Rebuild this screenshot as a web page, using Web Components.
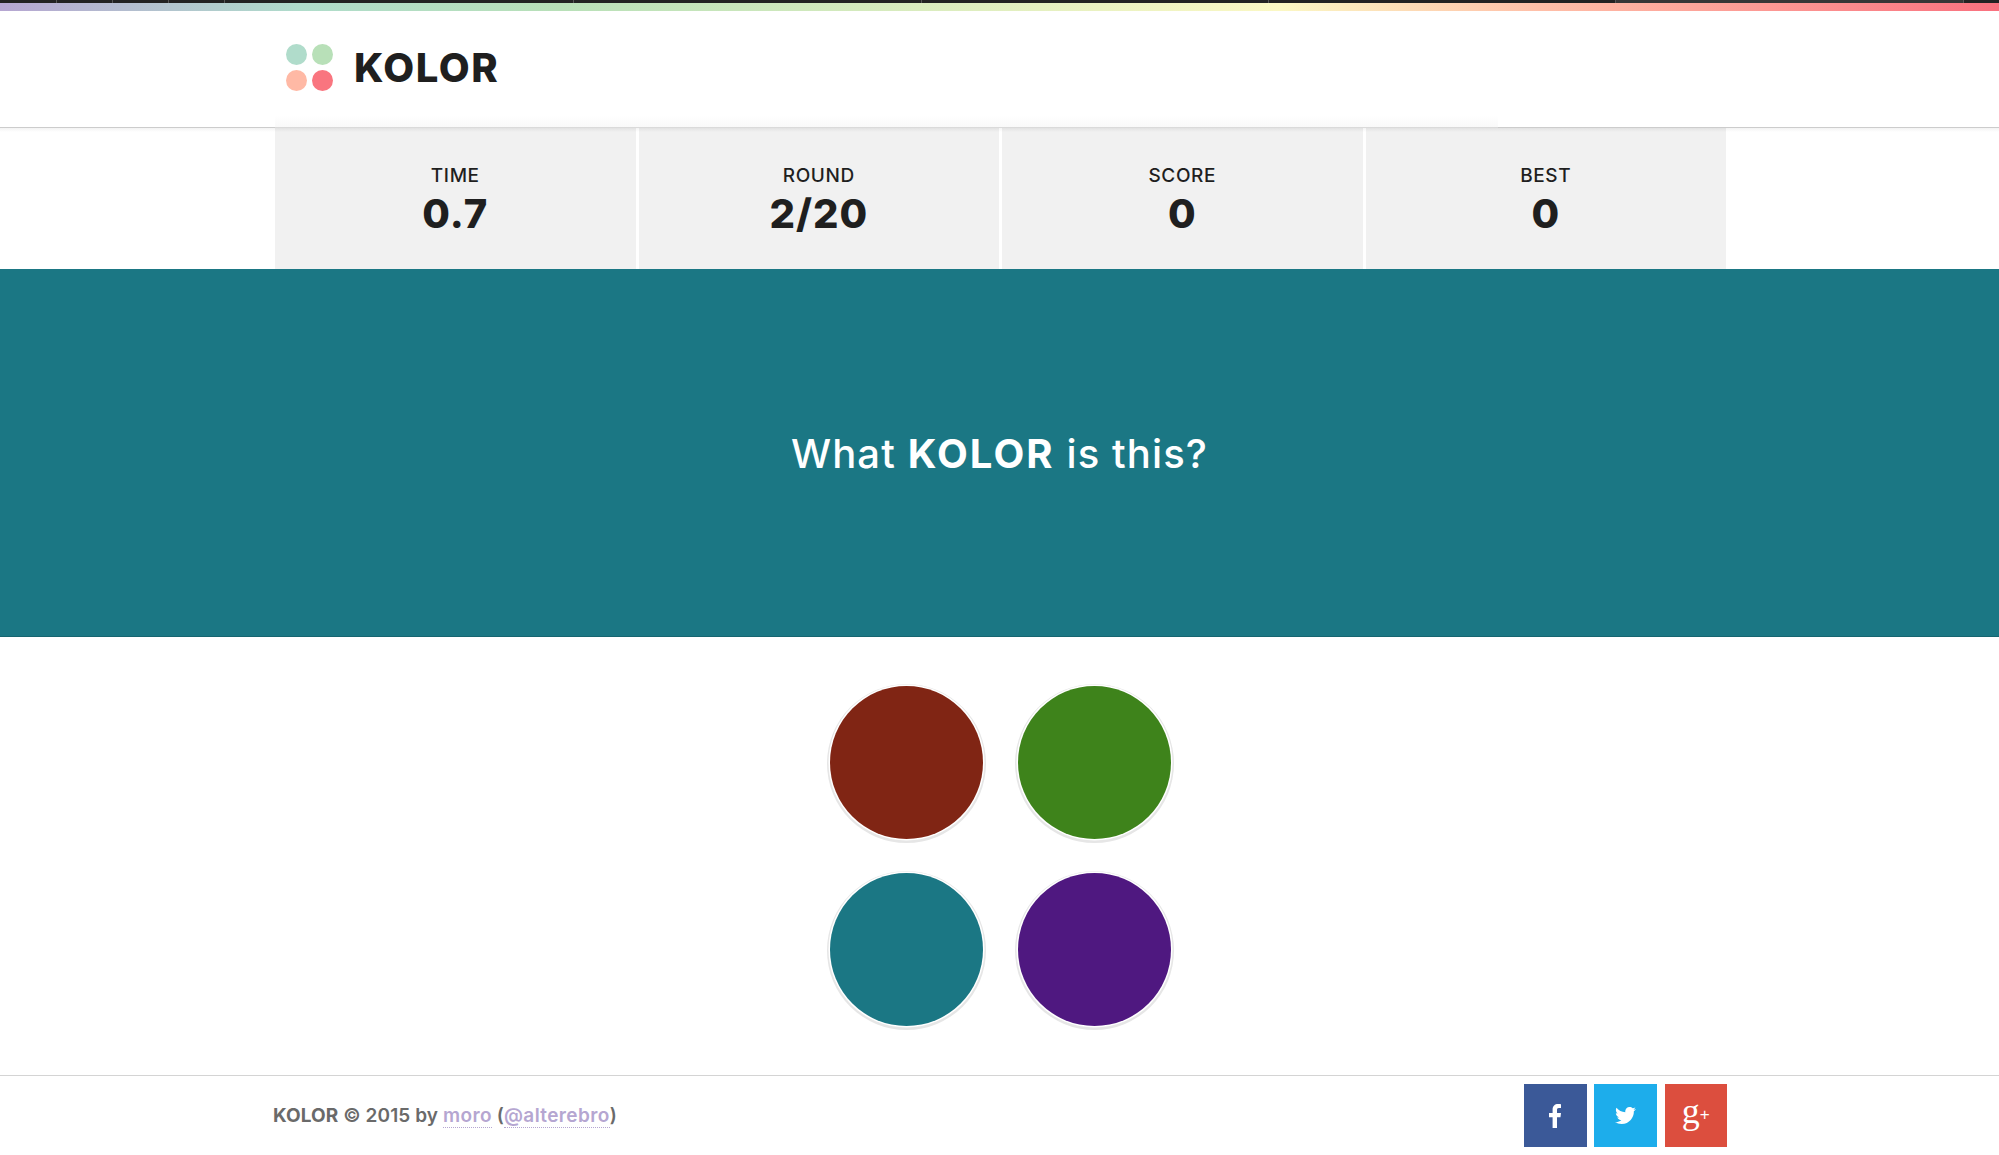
<!DOCTYPE html>
<html>
<head>
<meta charset="utf-8">
<title>KOLOR</title>
<style>
  html, body { margin: 0; height: 100%; background: #fff; }
  body { font-family: "Inter", "Liberation Sans", sans-serif; color: #1f1f1f; display: flex; flex-direction: column; height: 1155px; overflow: hidden; }
</style>
</head>
<body>
<kolor-topbar></kolor-topbar>
<kolor-header>KOLOR</kolor-header>
<kolor-stats>
  <kolor-stat label="TIME">0.7</kolor-stat>
  <kolor-stat label="ROUND">2/20</kolor-stat>
  <kolor-stat label="SCORE">0</kolor-stat>
  <kolor-stat label="BEST">0</kolor-stat>
</kolor-stats>
<kolor-prompt color="#1b7784">What <b>KOLOR</b> is this?</kolor-prompt>
<kolor-choices>
  <kolor-swatch color="#802514"></kolor-swatch>
  <kolor-swatch color="#3e831b"></kolor-swatch>
  <kolor-swatch color="#1b7784"></kolor-swatch>
  <kolor-swatch color="#4f1880"></kolor-swatch>
</kolor-choices>
<kolor-footer>
  <b>KOLOR</b> © 2015 by <a href="#">moro</a> (<a href="#">@alterebro</a>)
  <kolor-social slot="social" network="facebook" color="#3b5998"></kolor-social>
  <kolor-social slot="social" network="twitter" color="#1dadeb"></kolor-social>
  <kolor-social slot="social" network="google" color="#dc4e3e"></kolor-social>
</kolor-footer>

<script>
// small helper, every element gets an open shadow root
class KolorBase extends HTMLElement {
  constructor() {
    super();
    this.attachShadow({ mode: 'open' });
  }
}

class KolorTopbar extends KolorBase {
  connectedCallback() {
    this.shadowRoot.innerHTML = `
      <style>
        :host { display: block; flex: none; }
        .dark { height: 3px; background: #222; display: flex; }
        .dark i { width: 1px; background: #555; }
        .dark span { flex: none; }
        .dark .tab { background: #363636; }
        .grad { height: 8px; background: linear-gradient(to right, #b6a6d2 0%, #afdccb 15%, #b8e0b8 28%, #fbf8c4 64%, #ffbfa8 77%, #f9717f 100%); }
      </style>
      <div class="dark">
        <span style="width:56px"></span><i></i><span style="width:55px"></span><i></i><span style="width:55px"></span><i></i><span style="width:55px"></span><i></i>
        <span style="width:348px"></span><i></i><span style="width:347px"></span><i></i><span style="width:346px"></span><i></i><span style="width:346px"></span><i></i><span class="tab" style="width:347px"></span><i></i>
      </div>
      <div class="grad"></div>`;
  }
}

class KolorHeader extends KolorBase {
  connectedCallback() {
    this.shadowRoot.innerHTML = `
      <style>
        :host { display: block; flex: none; height: 116px; border-bottom: 1px solid #ccc; position: relative; }
        :host::after { content: ""; position: absolute; left: 275px; width: 1223px; bottom: -1px; height: 12px; background: linear-gradient(rgba(240,240,240,0), rgba(240,240,240,.4)); }
        .wrap { margin-left: 286px; height: 100%; display: flex; align-items: center; padding-bottom: 4px; box-sizing: border-box; }
        .dots { display: grid; grid-template-columns: 21px 21px; gap: 5px; margin-right: 21px; }
        .dots i { height: 21px; border-radius: 50%; }
        .name { font-size: 40px; font-weight: 800; letter-spacing: 1.5px; color: #1f1f1f; }
      </style>
      <div class="wrap">
        <div class="dots">
          <i style="background:#b0dccb"></i><i style="background:#b8e0b8"></i>
          <i style="background:#ffb9a5"></i><i style="background:#f9757f"></i>
        </div>
        <div class="name"><slot></slot></div>
      </div>`;
  }
}

class KolorStats extends KolorBase {
  connectedCallback() {
    this.shadowRoot.innerHTML = `
      <style>
        :host { display: block; flex: none; height: 141px; background: linear-gradient(#f3f3f3, #fff 4px); }
        .row { width: 1451px; height: 100%; margin-left: 275px; display: grid; grid-template-columns: repeat(4, 1fr); gap: 3px; }
      </style>
      <div class="row"><slot></slot></div>`;
  }
}

class KolorStat extends KolorBase {
  connectedCallback() {
    this.shadowRoot.innerHTML = `
      <style>
        :host { display: flex; flex-direction: column; align-items: center; background: linear-gradient(#e2e2e2, #f1f1f1 4px); padding-top: 36px; box-sizing: border-box; color: #1f1f1f; }
        .label { font-size: 19px; line-height: 24px; font-weight: 500; letter-spacing: .6px; }
        .value { font-size: 40px; line-height: 50px; font-weight: 800; letter-spacing: 1px; margin-top: 1px; }
      </style>
      <div class="label">${this.getAttribute('label')}</div>
      <div class="value"><slot></slot></div>`;
  }
}

class KolorPrompt extends KolorBase {
  connectedCallback() {
    this.shadowRoot.innerHTML = `
      <style>
        :host { display: flex; flex: none; height: 367px; align-items: center; justify-content: center; background: ${this.getAttribute('color')}; color: #fff; font-size: 40px; font-weight: 500; letter-spacing: 1.1px; border-bottom: 1px solid #166570; }
        .txt { margin-top: 2px; }
        ::slotted(b) { font-weight: 700; letter-spacing: 2.1px; }
      </style>
      <div class="txt"><slot></slot></div>`;
  }
}

class KolorChoices extends KolorBase {
  connectedCallback() {
    this.shadowRoot.innerHTML = `
      <style>
        :host { display: block; flex: none; height: 439px; box-sizing: border-box; padding: 49px 0 0 2px; border-bottom: 1px solid #d4d4d4; }
        .grid { display: grid; grid-template-columns: 153px 153px; gap: 34px 35px; justify-content: center; }
      </style>
      <div class="grid"><slot></slot></div>`;
  }
}

class KolorSwatch extends KolorBase {
  connectedCallback() {
    this.shadowRoot.innerHTML = `
      <style>
        :host { display: block; width: 153px; height: 153px; border-radius: 50%; background: ${this.getAttribute('color')}; box-shadow: 0 0 0 1.5px #fff, 0 1px 0 3px #e6e6e6; }
      </style>`;
  }
}

class KolorFooter extends KolorBase {
  connectedCallback() {
    this.shadowRoot.innerHTML = `
      <style>
        :host { display: block; flex: 1; }
        .wrap { margin: 0 272px 0 273px; height: 79px; display: flex; align-items: center; justify-content: space-between; }
        .txt { font-size: 19px; font-weight: 600; letter-spacing: .1px; color: #6a6a6a; }
        ::slotted(a) { color: #b5a6d1; text-decoration: none; border-bottom: 1px dotted #b5a6d1; letter-spacing: .38px; }
        ::slotted(b) { font-weight: 700; }
        .social { display: flex; gap: 7.75px; }
      </style>
      <div class="wrap">
        <div class="txt"><slot></slot></div>
        <div class="social"><slot name="social"></slot></div>
      </div>`;
  }
}

const ICONS = {
  facebook: `<svg width="12.4" height="24" viewBox="0 0 264 512"><path fill="#fff" d="M215.8 85H264V3.6C255.7 2.5 227.1 0 193.8 0 124.3 0 76.7 42.4 76.7 120.3V192H0v91h76.7v229h94V283h73.6l11.7-91h-85.3v-62.7c0-26.3 7.3-44.3 39.8-44.3z"/></svg>`,
  twitter: `<svg width="21" height="21" viewBox="0 0 512 512"><path fill="#fff" d="M459.37 151.716c.325 4.548.325 9.097.325 13.645 0 138.72-105.583 298.558-298.558 298.558-59.452 0-114.68-17.219-161.137-47.106 8.447.974 16.568 1.299 25.34 1.299 49.055 0 94.213-16.568 130.274-44.832-46.132-.975-84.792-31.188-98.112-72.772 6.498.974 12.995 1.624 19.818 1.624 9.421 0 18.843-1.3 27.614-3.573-48.081-9.747-84.143-51.98-84.143-102.985v-1.299c13.969 7.797 30.214 12.67 47.431 13.319-28.264-18.843-46.781-51.005-46.781-87.391 0-19.492 5.197-37.36 14.294-52.954 51.655 63.675 129.3 105.258 216.365 109.807-1.624-7.797-2.599-15.918-2.599-24.04 0-57.828 46.782-104.934 104.934-104.934 30.213 0 57.502 12.67 76.67 33.137 23.715-4.548 46.456-13.645 66.599-25.34-7.798 24.366-24.366 44.833-46.132 57.827 21.117-2.273 41.584-8.122 60.426-16.243-14.292 20.791-32.161 39.308-52.628 54.253z"/></svg>`,
  google: `<span class="g">g<small>+</small></span>`
};

class KolorSocial extends KolorBase {
  connectedCallback() {
    this.shadowRoot.innerHTML = `
      <style>
        :host { display: flex; width: 62.5px; height: 62.5px; align-items: center; justify-content: center; background: ${this.getAttribute('color')}; }
        .g { font-family: "Liberation Serif", serif; font-size: 36px; line-height: 1; color: #fff; margin-top: -9px; white-space: nowrap; }
        .g small { font-family: "Liberation Sans", sans-serif; font-size: 17px; font-weight: 400; vertical-align: 3px; margin-left: 0; }
      </style>
      ${ICONS[this.getAttribute('network')]}`;
  }
}

customElements.define('kolor-topbar', KolorTopbar);
customElements.define('kolor-header', KolorHeader);
customElements.define('kolor-stats', KolorStats);
customElements.define('kolor-stat', KolorStat);
customElements.define('kolor-prompt', KolorPrompt);
customElements.define('kolor-choices', KolorChoices);
customElements.define('kolor-swatch', KolorSwatch);
customElements.define('kolor-footer', KolorFooter);
customElements.define('kolor-social', KolorSocial);
</script>
</body>
</html>
